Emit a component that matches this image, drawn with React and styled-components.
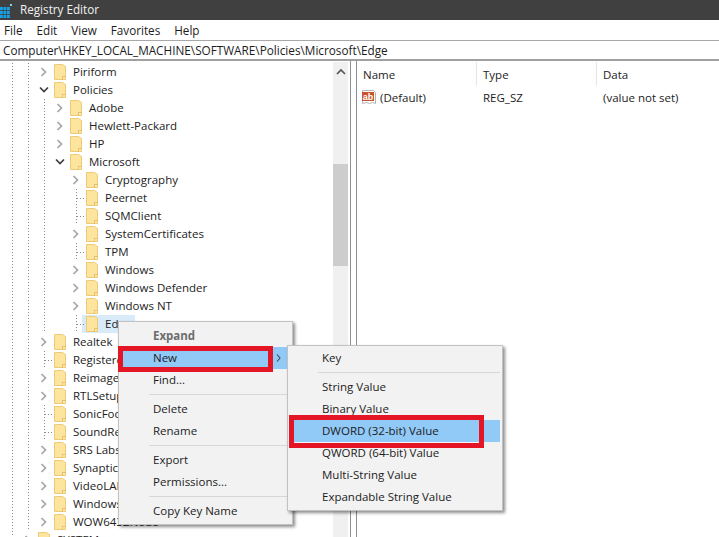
import React from 'react'
import styled, { createGlobalStyle } from 'styled-components'

const GlobalStyle = createGlobalStyle`
html,body{
  margin:0;
  padding:0;
  background:#fff;
  overflow:hidden;
}
body{
  font-family:"Open Sans","Noto Sans","Liberation Sans",sans-serif;
  font-size:11.5px;
  color:#1c1c1c;
}
`
const Window = styled.div`
position:relative;
width:719px;
height:537px;
overflow:hidden;
display:flex;
flex-direction:column;
`
const TitleBar = styled.div`
height:20px;
background:#404040;
color:#f2f2f2;
display:flex;
align-items:center;
gap:8px;
flex-shrink:0;
`
const TitleText = styled.span`
font-size:11.7px;
margin-bottom:3px;
`
const MenuBar = styled.div`
height:20px;
display:flex;
align-items:center;
gap:14px;
padding-left:4px;
font-size:11.7px;
flex-shrink:0;
`
const AddressBar = styled.div`
height:18px;
border-top:1px solid #a8a8a8;
border-bottom:2px solid #a0a0a0;
padding-left:3px;
display:flex;
align-items:center;
font-size:11.75px;
flex-shrink:0;
`
const Body = styled.div`
flex:1;
min-height:0;
display:flex;
`
const TreePane = styled.div`
width:333px;
padding-top:2px;
overflow:hidden;
flex-shrink:0;
`
const Row = styled.div`
height:18px;
display:flex;
align-items:center;
padding-left:4px;
white-space:nowrap;
`
const Slot = styled.span`
position:relative;
width:16px;
height:18px;
flex-shrink:0;
display:flex;
align-items:center;
justify-content:center;
background:${p => p.$line ? 'repeating-linear-gradient(to bottom,#8a8a8a 0 1px,transparent 1px 3px) 8px 0/1px 100% no-repeat' : 'none'};
&::after{
  content:"";
  display:${p => p.$corner ? 'block' : 'none'};
  position:absolute;
  left:9px;
  top:9px;
  width:7px;
  height:1px;
  background:repeating-linear-gradient(to right,#8a8a8a 0 1px,transparent 1px 3px);
}
`
const Item = styled.span`
display:flex;
align-items:center;
height:18px;
margin-left:-2px;
padding:0 4px;
background:${p => p.$selected ? '#d9ebf9' : 'transparent'};
`
const Name = styled.span`
margin-left:7px;
margin-bottom:2px;
`
const ScrollBar = styled.div`
width:15px;
background:#f0f0f0;
flex-shrink:0;
margin-top:1px;
display:flex;
flex-direction:column;
align-items:center;
`
const ScrollButton = styled.div`
height:20px;
display:flex;
align-items:center;
justify-content:center;
`
const ScrollThumb = styled.div`
width:100%;
height:102px;
margin-top:82px;
background:#cdcdcd;
`
const Splitter = styled.div`
width:7px;
margin-left:2px;
box-sizing:border-box;
border-left:1px solid #8e8e96;
border-right:1px solid #8e8e96;
flex-shrink:0;
`
const ListPane = styled.div`
flex:1;
padding-top:1px;
`
const ListGrid = styled.div`
display:grid;
grid-template-columns:120px 120px 1fr;
`
const HeaderCell = styled.div`
height:24px;
padding:1px 0 0 6px;
display:flex;
align-items:center;
border-right:${p => p.$last ? 'none' : '1px solid #e5e5e5'};
box-sizing:border-box;
`
const Cell = styled.div`
height:22px;
padding-left:${p => p.$icon ? '4px' : '6px'};
display:flex;
align-items:center;
gap:3px;
`
const Menu = styled.div`
position:absolute;
left:${p => p.$left}px;
top:${p => p.$top}px;
width:${p => p.$width}px;
box-sizing:border-box;
padding:${p => p.$padTop}px 2px 2px 1px;
background:#f2f2f2;
border:1px solid #c2c2c2;
box-shadow:2px 2px 3px rgba(0,0,0,.45);
`
const MenuEntry = styled.div`
position:relative;
height:22px;
padding-left:33px;
display:flex;
align-items:center;
justify-content:space-between;
background:${p => p.$active ? '#91c9f7' : 'transparent'};
color:${p => p.$disabled ? '#6d6d6d' : '#1c1c1c'};
font-weight:${p => p.$disabled ? 700 : 400};
`
const EntryLabel = styled.span`
margin-bottom:2px;
`
const Separator = styled.div`
height:1px;
margin:3px 0 3px ${p => p.$indent}px;
background:#d7d7d7;
`
const Arrow = styled.svg`
margin-right:9px;
`
const RedBox = styled.div`
position:absolute;
left:${p => p.$left}px;
top:${p => p.$top}px;
width:${p => p.$width}px;
height:${p => p.$height}px;
box-sizing:border-box;
border:5px solid #e41525;
`

const Folder = () => (
  <svg width="12" height="16" viewBox="0 0 12 16">
    <path d="M.5.5h8l3 2v13H.5z" fill="#fde59f" stroke="#eccb74" />
    <path d="M8.5 15.5v-3h3" fill="#fff3c9" stroke="#e3bd60" />
  </svg>
)

const Chevron = ({ open }) => open ? (
  <svg width="10" height="8" viewBox="0 0 10 8">
    <path d="M1 1.5l4 4 4-4" fill="none" stroke="#3d3d3d" strokeWidth="1.7" />
  </svg>
) : (
  <svg width="8" height="10" viewBox="0 0 8 10">
    <path d="M1.5 1l4 4-4 4" fill="none" stroke="#a6a6a6" strokeWidth="1.7" />
  </svg>
)

const AppIcon = () => (
  <svg width="12" height="15" viewBox="0 0 12 15">
    <g fill="#17a2e6">
      {[0, 4, 8].map(y => [0, 3.5, 7].map(x => (
        <rect key={`${x}-${y}`} x={x} y={y + 4} width="2.8" height="3.2" />
      )))}
      <rect x="10" y="1" width="2" height="2" fill="#7fd4f7" />
    </g>
  </svg>
)

const StringIcon = () => (
  <svg width="16" height="16" viewBox="0 0 16 16">
    <path d="M1.5 1.5h11l2 2v11l-3-1-3 1-3-1-4 1z" fill="#fff" stroke="#b5b5b5" />
    <rect x="1" y="3" width="12" height="9" fill="#c9542c" />
    <text x="7" y="10.5" textAnchor="middle" fontSize="9" fontWeight="700" fontFamily="Liberation Sans" fill="#fff">ab</text>
  </svg>
)

// depth: 0 is the level of Policies, kind: closed / open / leaf
const rows = [
  ['Piriform', 0, 'closed'],
  ['Policies', 0, 'open'],
  ['Adobe', 1, 'closed'],
  ['Hewlett-Packard', 1, 'closed'],
  ['HP', 1, 'closed'],
  ['Microsoft', 1, 'open'],
  ['Cryptography', 2, 'closed'],
  ['Peernet', 2, 'leaf'],
  ['SQMClient', 2, 'leaf'],
  ['SystemCertificates', 2, 'closed'],
  ['TPM', 2, 'leaf'],
  ['Windows', 2, 'closed'],
  ['Windows Defender', 2, 'closed'],
  ['Windows NT', 2, 'closed'],
  ['Edge', 2, 'leaf', true],
  ['Realtek', 0, 'closed'],
  ['Registered', 0, 'leaf'],
  ['Reimage', 0, 'closed'],
  ['RTLSetup', 0, 'closed'],
  ['SonicFocus', 0, 'leaf'],
  ['SoundRes', 0, 'leaf'],
  ['SRS Labs', 0, 'closed'],
  ['Synaptics', 0, 'closed'],
  ['VideoLAN', 0, 'closed'],
  ['Windows', 0, 'closed'],
  ['WOW6432Node', 0, 'closed'],
  ['SYSTEM', -1, 'closed'],
]

const guideLines = depth => {
  if (depth === -1) return [true]
  if (depth === 0) return [true, true]
  if (depth === 1) return [true, true, true]
  return [true, true, true, false]
}

const TreeRow = ({ name, depth, kind, selected }) => (
  <Row>
    {guideLines(depth).map((on, i) => <Slot key={i} $line={on} />)}
    {kind === 'leaf'
      ? <Slot $line $corner />
      : <Slot><Chevron open={kind === 'open'} /></Slot>}
    <Item $selected={selected}>
      <Folder />
      <Name>{name}</Name>
    </Item>
  </Row>
)

const App = () => {
  return (
    <Window>
      <GlobalStyle />
      <TitleBar>
        <AppIcon />
        <TitleText>Registry Editor</TitleText>
      </TitleBar>
      <MenuBar>
        <span>File</span>
        <span>Edit</span>
        <span>View</span>
        <span>Favorites</span>
        <span>Help</span>
      </MenuBar>
      <AddressBar>Computer\HKEY_LOCAL_MACHINE\SOFTWARE\Policies\Microsoft\Edge</AddressBar>
      <Body>
        <TreePane>
          {rows.map(([name, depth, kind, selected], i) => (
            <TreeRow key={i} name={name} depth={depth} kind={kind} selected={selected} />
          ))}
        </TreePane>
        <ScrollBar>
          <ScrollButton>
            <svg width="10" height="8" viewBox="0 0 10 8">
              <path d="M1 6l4-4 4 4" fill="none" stroke="#555" strokeWidth="1.7" />
            </svg>
          </ScrollButton>
          <ScrollThumb />
        </ScrollBar>
        <Splitter />
        <ListPane>
          <ListGrid>
            <HeaderCell>Name</HeaderCell>
            <HeaderCell>Type</HeaderCell>
            <HeaderCell $last>Data</HeaderCell>
            <Cell $icon><StringIcon />(Default)</Cell>
            <Cell>REG_SZ</Cell>
            <Cell>(value not set)</Cell>
          </ListGrid>
        </ListPane>
      </Body>

      <Menu $left={118} $top={321} $width={175} $padTop={3}>
        <MenuEntry $disabled><EntryLabel>Expand</EntryLabel></MenuEntry>
        <MenuEntry $active>
          <EntryLabel>New</EntryLabel>
          <Arrow width="5" height="8" viewBox="0 0 5 8">
            <path d="M1 .5l3 3.5-3 3.5" fill="none" stroke="#444" strokeWidth="1.1" />
          </Arrow>
        </MenuEntry>
        <MenuEntry><EntryLabel>Find...</EntryLabel></MenuEntry>
        <Separator $indent={29} />
        <MenuEntry><EntryLabel>Delete</EntryLabel></MenuEntry>
        <MenuEntry><EntryLabel>Rename</EntryLabel></MenuEntry>
        <Separator $indent={29} />
        <MenuEntry><EntryLabel>Export</EntryLabel></MenuEntry>
        <MenuEntry><EntryLabel>Permissions...</EntryLabel></MenuEntry>
        <Separator $indent={29} />
        <MenuEntry><EntryLabel>Copy Key Name</EntryLabel></MenuEntry>
      </Menu>
      <RedBox $left={118} $top={346} $width={155} $height={26} />

      <Menu $left={287} $top={345} $width={216} $padTop={1}>
        <MenuEntry><EntryLabel>Key</EntryLabel></MenuEntry>
        <Separator $indent={29} />
        <MenuEntry><EntryLabel>String Value</EntryLabel></MenuEntry>
        <MenuEntry><EntryLabel>Binary Value</EntryLabel></MenuEntry>
        <MenuEntry $active><EntryLabel>DWORD (32-bit) Value</EntryLabel></MenuEntry>
        <MenuEntry><EntryLabel>QWORD (64-bit) Value</EntryLabel></MenuEntry>
        <MenuEntry><EntryLabel>Multi-String Value</EntryLabel></MenuEntry>
        <MenuEntry><EntryLabel>Expandable String Value</EntryLabel></MenuEntry>
      </Menu>
      <RedBox $left={289} $top={415} $width={195} $height={33} />
    </Window>
  )
}

export default App
